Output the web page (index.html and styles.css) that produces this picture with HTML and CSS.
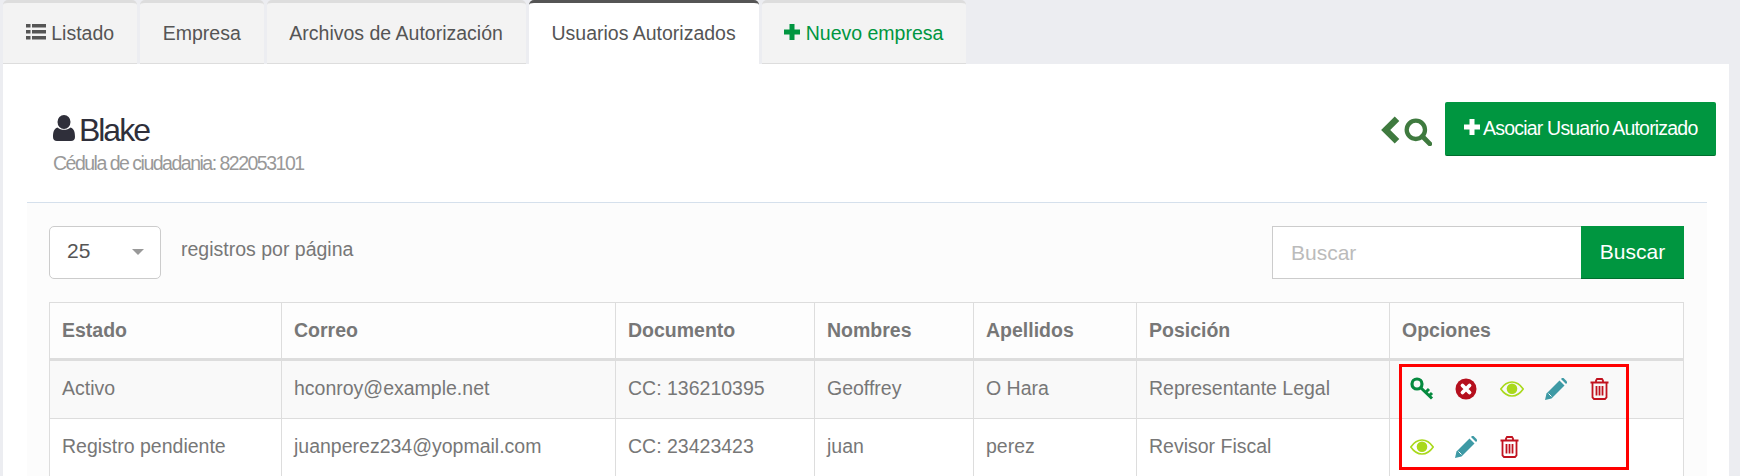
FILE: index.html
```html
<!DOCTYPE html>
<html lang="es">
<head>
    <meta charset="UTF-8">
    <title>Usuarios Autorizados</title>
    <link rel="stylesheet" href="styles.css">
</head>
<body>
    <svg class="sprite" width="0" height="0">
        <symbol id="i-key" viewBox="0 0 24 24">
            <circle cx="7" cy="7" r="5" fill="none" stroke="currentColor" stroke-width="3.200"/>
            <path d="M10.500 10.500 22 21.500M15.500 15.500l3.500-3.500M19 19l3-3" fill="none" stroke="currentColor" stroke-width="3"/>
        </symbol>
        <symbol id="i-cross" viewBox="0 0 22 22">
            <circle cx="11" cy="11" r="10.500" fill="currentColor"/>
            <path d="M7.500 7.500l7 7M14.500 7.500l-7 7" stroke="#fff" stroke-width="3.800" stroke-linecap="round"/>
        </symbol>
        <symbol id="i-eye" viewBox="0 0 24 16">
            <path d="M.8 8C4 3.300 7.800 1 12 1s8 2.300 11.200 7C20 12.700 16.200 15 12 15S4 12.700.8 8Z" fill="none" stroke="currentColor" stroke-width="1.600"/>
            <circle cx="12" cy="7.800" r="5.300" fill="currentColor"/>
        </symbol>
        <symbol id="i-pencil" viewBox="0 0 22 22">
            <path d="M0 22 1.500 15.500 14.500 2.500 19.500 7.500 6.500 20.500Z" fill="currentColor"/>
            <path d="M16 1 17 0h1.500L22 3.500V5L21 6Z" fill="currentColor"/>
            <path d="M3.500 15.500l3 3" stroke="#fff" stroke-width="1"/>
        </symbol>
        <symbol id="i-trash" viewBox="0 0 19 22">
            <path d="M.5 4.500h18M6 4.500V2.500L7 1h5l1 1.500v2" fill="none" stroke="currentColor" stroke-width="1.800"/>
            <path d="M2.500 4.500V19.500l1.500 1.500h11l1.500-1.500V4.500" fill="none" stroke="currentColor" stroke-width="1.800"/>
            <path d="M6.500 8v9.500M9.500 8v9.500M12.500 8v9.500" stroke="currentColor" stroke-width="1.800"/>
        </symbol>
        <symbol id="i-plus" viewBox="0 0 16 16">
            <path d="M5.500 0h5v5.500H16v5h-5.500V16h-5v-5.500H0v-5h5.500Z" fill="currentColor"/>
        </symbol>
    </svg>

    <ul class="tabs">
        <li class="tab"><svg class="list-icon" viewBox="0 0 20 16"><path d="M0 0h4.500v3.500H0ZM6 0h14v3.500H6ZM0 6h4.500v3.500H0ZM6 6h14v3.500H6ZM0 12h4.500v3.500H0ZM6 12h14v3.500H6Z" fill="currentColor"/></svg> Listado</li>
        <li class="tab">Empresa</li>
        <li class="tab">Archivos de Autorización</li>
        <li class="tab active">Usuarios Autorizados</li>
        <li class="tab tab-new"><svg class="plus-icon"><use href="#i-plus"/></svg> Nuevo empresa</li>
    </ul>

    <div class="panel">
        <div class="header">
            <div class="person">
                <h2><svg class="user-icon" viewBox="0 0 22 26"><ellipse cx="11" cy="7" rx="6.500" ry="7" fill="currentColor"/><path d="M0 22c0-5 1-8.500 4.500-9.500 1.800 1.500 4 2.300 6.500 2.300s4.700-.8 6.500-2.300C21 13.500 22 17 22 22c0 2.500-1.500 4-4 4H4c-2.500 0-4-1.500-4-4Z" fill="currentColor"/></svg> Blake</h2>
                <p>Cédula de ciudadania: 822053101</p>
            </div>
            <div class="header-actions">
                <svg class="back-icon" viewBox="0 0 18 26"><path d="M15.500 2.500 5 13l10.500 10.500" fill="none" stroke="currentColor" stroke-width="6"/></svg>
                <svg class="search-icon" viewBox="0 0 26 26"><circle cx="11" cy="11" r="8.500" fill="none" stroke="currentColor" stroke-width="4"/><path d="M17 17l7 7" stroke="currentColor" stroke-width="4.500" stroke-linecap="round"/></svg>
                <button class="btn-assoc"><svg class="plus-icon"><use href="#i-plus"/></svg> Asociar Usuario Autorizado</button>
            </div>
        </div>

        <div class="content">
            <div class="controls">
                <div class="length">
                    <div class="select">25<span class="caret"></span></div>
                    <span>registros por página</span>
                </div>
                <div class="search">
                    <input type="text" placeholder="Buscar">
                    <button>Buscar</button>
                </div>
            </div>

            <table>
                <colgroup>
                    <col class="c1"><col class="c2"><col class="c3"><col class="c4"><col class="c5"><col class="c6"><col class="c7">
                </colgroup>
                <thead>
                    <tr>
                        <th>Estado</th><th>Correo</th><th>Documento</th><th>Nombres</th><th>Apellidos</th><th>Posición</th><th>Opciones</th>
                    </tr>
                </thead>
                <tbody>
                    <tr class="odd">
                        <td>Activo</td>
                        <td>hconroy@example.net</td>
                        <td>CC: 136210395</td>
                        <td>Geoffrey</td>
                        <td>O Hara</td>
                        <td>Representante Legal</td>
                        <td class="options-cell">
                            <div class="highlight"></div>
                            <div class="options">
                                <span class="opt"><svg class="ic-key"><use href="#i-key"/></svg></span>
                                <span class="opt"><svg class="ic-cross"><use href="#i-cross"/></svg></span>
                                <span class="opt"><svg class="ic-eye"><use href="#i-eye"/></svg></span>
                                <span class="opt"><svg class="ic-pencil"><use href="#i-pencil"/></svg></span>
                                <span class="opt"><svg class="ic-trash"><use href="#i-trash"/></svg></span>
                            </div>
                        </td>
                    </tr>
                    <tr>
                        <td>Registro pendiente</td>
                        <td>juanperez234@yopmail.com</td>
                        <td>CC: 23423423</td>
                        <td>juan</td>
                        <td>perez</td>
                        <td>Revisor Fiscal</td>
                        <td class="options-cell">
                            <div class="options">
                                <span class="opt"><svg class="ic-eye"><use href="#i-eye"/></svg></span>
                                <span class="opt"><svg class="ic-pencil"><use href="#i-pencil"/></svg></span>
                                <span class="opt"><svg class="ic-trash"><use href="#i-trash"/></svg></span>
                            </div>
                        </td>
                    </tr>
                </tbody>
            </table>
        </div>
    </div>
</body>
</html>
```

FILE: styles.css
```css
html, body { height: 476px; overflow: hidden; }
body { margin: 0; padding: 0 11px 0 3px; background: #ecedf1; font-family: "Liberation Sans", Arial, sans-serif; font-size: 19.500px; color: #777; }
.sprite { position: absolute; }

.tabs { display: flex; list-style: none; margin: 0; padding: 0; height: 64px; }
.tab { box-sizing: border-box; height: 64px; padding: 18px 22.800px 0; margin-right: 3px; background: #f3f3f3; border-top: 3px solid #ddd; border-bottom: 1px solid #ddd; border-radius: 5px 5px 0 0; color: #555; line-height: 24px; white-space: nowrap; }
.tab.active { background: #fff; border-top-color: #555; border-bottom-color: #fff; }
.tab-new { color: #009640; }
.list-icon { width: 20px; height: 16px; color: #555; }
.plus-icon { width: 16px; height: 16px; }

.panel { background: #fff; height: 412px; padding: 0 22px 0 24px; }
.header { display: flex; justify-content: space-between; height: 138px; box-sizing: border-box; padding-top: 38px; margin-right: -9px; }
.person { padding-left: 26px; }
.person h2 { margin: 10px 0 0; font-size: 32px; font-weight: 400; line-height: 36px; letter-spacing: -2px; color: #2f2f3a; }
.user-icon { width: 22px; height: 26px; margin-right: -3px; }
.person p { margin: 4px 0 0; font-size: 19.500px; line-height: 22px; letter-spacing: -1.500px; color: #999; }
.header-actions { display: flex; align-items: flex-start; }
.back-icon { width: 20px; height: 28px; margin: 14px 4px 0 0; color: #3f7a3f; }
.search-icon { width: 28px; height: 28px; margin: 16px 13px 0 0; color: #3f7a3f; }
.btn-assoc { height: 54px; width: 271px; padding: 0; border: 0; border-bottom: 1px solid #006e2e; border-radius: 2px; background: #009640; color: #fff; font: 19.500px "Liberation Sans", Arial, sans-serif; letter-spacing: -.800px; }

.content { box-sizing: border-box; height: 274px; background: #fcfcfc; border-top: 1px solid #d5e0ec; padding: 23px 22px 0; }
.controls { display: flex; justify-content: space-between; width: 1635px; height: 76px; }
.length { display: flex; align-items: flex-start; }
.length span:last-child { line-height: 46px; margin-left: 20px; }
.select { position: relative; box-sizing: border-box; width: 112px; height: 53px; padding-left: 17px; border: 1px solid #ccc; border-radius: 5px; background: #fff; color: #555; font-size: 21px; line-height: 48px; }
.caret { position: absolute; right: 16px; top: 22px; border: 6px solid transparent; border-top: 6px solid #999; border-bottom: 0; }
.search { display: flex; height: 53px; }
.search input { box-sizing: border-box; width: 309px; height: 53px; padding: 0 18px; border: 1px solid #ccc; border-right: 0; background: #fff; font: 21px "Liberation Sans", Arial, sans-serif; }
.search input::placeholder { color: #bbb; }
.search button { width: 103px; height: 53px; padding: 0; border: 0; border-bottom: 1px solid #006e2e; background: #009640; color: #fff; font: 21px "Liberation Sans", Arial, sans-serif; }

table { border-collapse: collapse; table-layout: fixed; width: 1634px; background: #fff; }
.c1 { width: 232px; } .c2 { width: 334px; } .c3 { width: 199px; } .c4 { width: 159px; } .c5 { width: 163px; } .c6 { width: 253px; } .c7 { width: 294px; }
th, td { border: 1px solid #ddd; padding: 0 12px; text-align: left; font-size: 19.500px; color: #777; }
th { height: 55px; font-weight: 700; border-bottom: 3px solid #ddd; background: #fdfdfd; }
td { height: 55px; padding-bottom: 2px; }
.odd td { background: #f9f9f9; }
.options-cell { position: relative; padding: 0 0 1px 20px; }
.options { display: flex; align-items: center; }
.opt { display: flex; align-items: center; width: 45px; }
.highlight { position: absolute; left: 9px; top: 3px; width: 224px; height: 100px; border: 3px solid #f00; }
.ic-key { width: 24px; height: 24px; color: #068a3f; }
.ic-cross { width: 22px; height: 22px; color: #b5101e; }
.ic-eye { width: 24px; height: 16px; color: #a9d91c; }
.ic-pencil { width: 22px; height: 22px; color: #3e9aa5; }
.ic-trash { width: 19px; height: 22px; color: #c1121f; }
```
